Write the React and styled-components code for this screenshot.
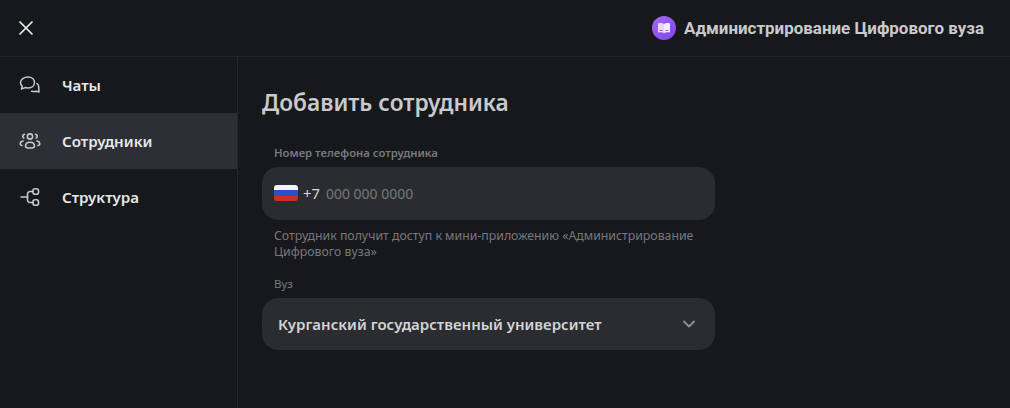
import React from "react";
import styled, { createGlobalStyle } from "styled-components";

const GlobalStyle = createGlobalStyle`
  html, body {
    margin: 0;
    padding: 0;
    height: 100%;
    background: #17181c;
  }
  * {
    box-sizing: border-box;
  }
  body {
    font-family: "Noto Sans", "Open Sans", sans-serif;
  }
`;

const Page = styled.div`
  width: 1010px;
  height: 408px;
  display: flex;
  flex-direction: column;
  overflow: hidden;
  background: #17181c;
`;

const Header = styled.header`
  height: 57px;
  flex-shrink: 0;
  display: flex;
  align-items: center;
  justify-content: space-between;
  padding: 0 26px 0 18px;
  border-bottom: 1px solid #26272b;
`;

const CloseBtn = styled.button`
  width: 16px;
  height: 16px;
  padding: 0;
  border: none;
  background: none;
  display: flex;
  color: #eceded;
`;

const AppInfo = styled.div`
  display: flex;
  align-items: center;
  gap: 8px;
`;

const AppLogo = styled.div`
  width: 24px;
  height: 24px;
  border-radius: 50%;
  background: linear-gradient(135deg, #a868f5, #7c45e6);
  display: flex;
  align-items: center;
  justify-content: center;
`;

const AppName = styled.div`
  font-family: Roboto, sans-serif;
  font-size: 16.95px;
  font-weight: 700;
  color: #c9cacc;
`;

const Body = styled.div`
  flex: 1;
  display: flex;
`;

const Sidebar = styled.nav`
  width: 238px;
  border-right: 1px solid #26272b;
`;

const NavRow = styled.div`
  height: 56px;
  display: flex;
  align-items: center;
  gap: 21px;
  padding-left: 19px;
  background: ${(p) => (p.$active ? "#2d2e36" : "transparent")};
  color: #c8c9cc;
`;

const NavIcon = styled.span`
  width: 22px;
  display: flex;
  justify-content: center;
`;

const NavLabel = styled.span`
  font-size: 15.1px;
  font-weight: 600;
  color: #e6e7e9;
`;

const Main = styled.main`
  flex: 1;
  padding: 30px 0 0 24px;
`;

const Title = styled.h1`
  margin: 0 0 26px;
  font-size: 22.7px;
  line-height: 32px;
  font-weight: 600;
  color: #c9cacc;
`;

const Form = styled.div`
  width: 453px;
`;

const FieldLabel = styled.div`
  padding-left: 12px;
  margin-bottom: 6px;
  font-size: ${(p) => (p.$bold ? "11.3px" : "11.5px")};
  line-height: 16px;
  font-weight: ${(p) => (p.$bold ? 600 : 400)};
  color: #77787e;
`;

const PhoneInput = styled.div`
  height: 53px;
  border-radius: 16px;
  background: #2b2c30;
  display: flex;
  align-items: center;
  padding: 0 0 1px 12px;
`;

const Flag = styled.div`
  width: 24px;
  height: 16px;
  border-radius: 3px;
  margin-right: 5px;
  background: linear-gradient(#f4f4f6 0 33%, #2b50c8 33% 66%, #d22b20 66%);
`;

const Code = styled.span`
  font-size: 14.8px;
  color: #d6d7d9;
  margin-right: 6px;
`;

const Placeholder = styled.span`
  font-size: 14px;
  color: #77787d;
`;

const Hint = styled.div`
  padding: 0 12px;
  margin: 8px 0 16px;
  font-size: 12.3px;
  line-height: 16px;
  color: #77787e;
`;

const SelectBox = styled.div`
  height: 52px;
  border-radius: 16px;
  background: #2b2c30;
  display: flex;
  align-items: center;
  justify-content: space-between;
  padding: 0 18px 0 16px;
  color: #8d8e92;
`;

const SelectValue = styled.span`
  font-size: 15px;
  font-weight: 600;
  color: #d3d4d6;
`;

const Chats = () => (
  <svg width="22" height="20" viewBox="0 0 22 20" fill="none" stroke="currentColor" strokeWidth="1.5" strokeLinecap="round" strokeLinejoin="round">
    <path d="M9 2c4 0 6.500 2.300 6.500 5.500S13 13 9 13c-1 0-2-.2-2.800-.4L2.500 14l.7-3C2 10 1.500 8.800 1.500 7.500 1.500 4.300 5 2 9 2z" />
    <path d="M18 8.500c1 .8 1.700 2 1.700 3.200l.3 5.300-2.400-.8c-1 .4-3 .4-5 .1" />
  </svg>
);

const People = () => (
  <svg width="22" height="18" viewBox="0 0 22 18" fill="none" stroke="currentColor" strokeWidth="1.6" strokeLinecap="round" strokeLinejoin="round">
    <circle cx="11" cy="4.500" r="2.600" />
    <path d="M6.500 14.500c0-2.800 2-4.200 4.500-4.200s4.500 1.400 4.500 4.200c0 1-2 1.500-4.500 1.500s-4.500-.5-4.500-1.500z" />
    <path d="M5.500 2.200C4.300 2.500 3.600 3.500 3.800 4.600c.1.600.5 1.100 1 1.400" />
    <path d="M16.500 2.200c1.200.3 1.900 1.300 1.700 2.400-.1.600-.5 1.100-1 1.400" />
    <path d="M4 9c-1.500.3-2.800 1.500-2.800 3 0 .8.700 1.300 1.800 1.500" />
    <path d="M18 9c1.500.3 2.800 1.500 2.800 3 0 .8-.7 1.300-1.800 1.500" />
  </svg>
);

const Tree = () => (
  <svg width="20" height="20" viewBox="0 0 20 20" fill="none" stroke="currentColor" strokeWidth="1.6" strokeLinecap="round" strokeLinejoin="round">
    <path d="M1 10h6.500" />
    <path d="M13 4.500h-3a2.500 2.500 0 0 0-2.500 2.500v6a2.500 2.500 0 0 0 2.500 2.500h3" />
    <rect x="13" y="1.800" width="5.500" height="5.400" rx="2" />
    <rect x="13" y="12.800" width="5.500" height="5.400" rx="2" />
  </svg>
);

const navItems = [
  { label: "Чаты", icon: <Chats /> },
  { label: "Сотрудники", icon: <People />, active: true },
  { label: "Структура", icon: <Tree /> },
];

export default function App() {
  return (
    <Page>
      <GlobalStyle />
      <Header>
        <CloseBtn aria-label="Закрыть">
          <svg width="16" height="16" viewBox="0 0 16 16" fill="none" stroke="currentColor" strokeWidth="1.7" strokeLinecap="round">
            <path d="M2 2l12 12M14 2L2 14" />
          </svg>
        </CloseBtn>
        <AppInfo>
          <AppLogo>
            <svg width="14" height="12" viewBox="0 0 14 12">
              <path d="M1 1.500c2-.6 4.500-.6 6 .5v9c-1.500-1-4-1-6-.5z" fill="#e6d8fb" />
              <path d="M13 1.500c-2-.6-4.500-.6-6 .5v9c1.500-1 4-1 6-.5z" fill="#f3ecfd" />
              <path d="M2.500 8.500h3M8.500 8.500h3" stroke="#c04f9c" strokeWidth="1" />
            </svg>
          </AppLogo>
          <AppName>Администрирование Цифрового вуза</AppName>
        </AppInfo>
      </Header>
      <Body>
        <Sidebar>
          {navItems.map((item) => (
            <NavRow key={item.label} $active={item.active}>
              <NavIcon>{item.icon}</NavIcon>
              <NavLabel>{item.label}</NavLabel>
            </NavRow>
          ))}
        </Sidebar>
        <Main>
          <Title>Добавить сотрудника</Title>
          <Form>
            <FieldLabel $bold>Номер телефона сотрудника</FieldLabel>
            <PhoneInput>
              <Flag />
              <Code>+7</Code>
              <Placeholder>000 000 0000</Placeholder>
            </PhoneInput>
            <Hint>Сотрудник получит доступ к мини-приложению «Администрирование Цифрового вуза»</Hint>
            <FieldLabel>Вуз</FieldLabel>
            <SelectBox>
              <SelectValue>Курганский государственный университет</SelectValue>
              <svg width="16" height="16" viewBox="0 0 16 16" fill="none" stroke="currentColor" strokeWidth="2" strokeLinecap="round" strokeLinejoin="round">
                <path d="M3 5.500l5 5 5-5" />
              </svg>
            </SelectBox>
          </Form>
        </Main>
      </Body>
    </Page>
  );
}
